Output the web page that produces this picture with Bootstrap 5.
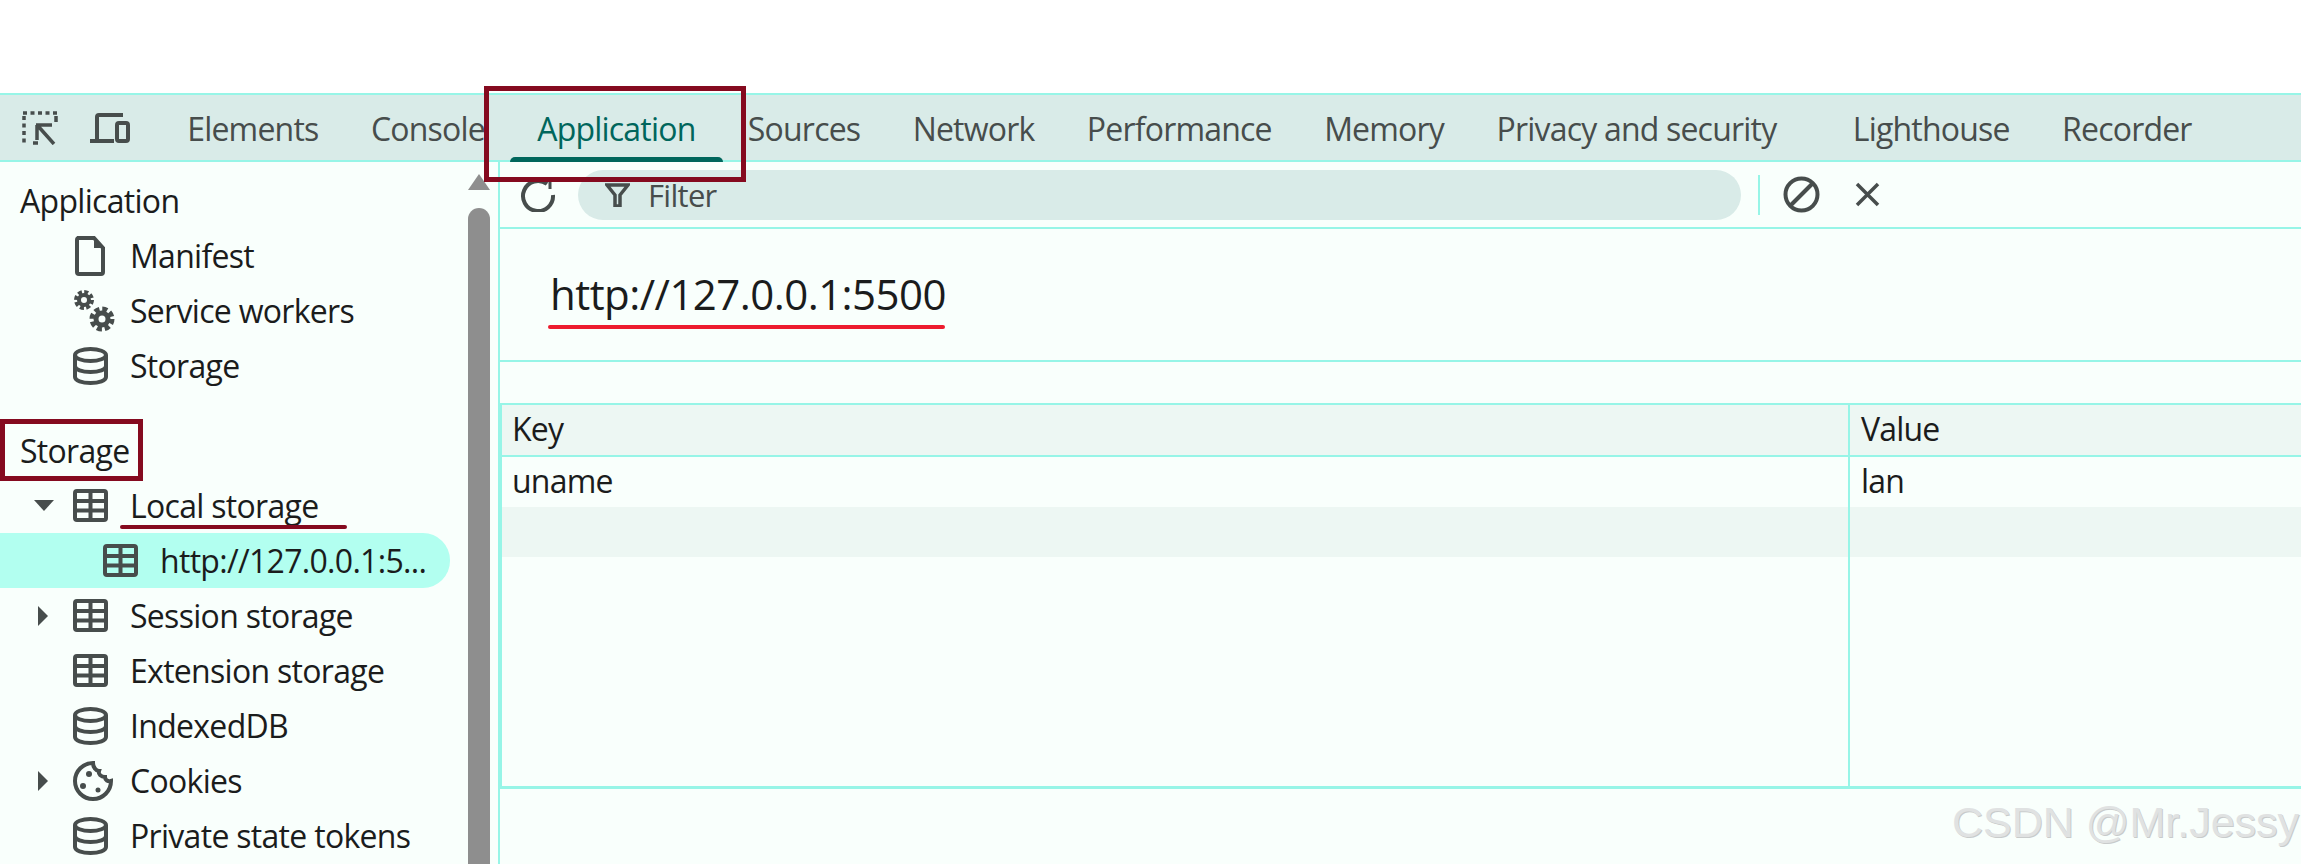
<!DOCTYPE html>
<html lang="en"><head><meta charset="utf-8"><title>Application</title>
<link href="https://cdn.jsdelivr.net/npm/bootstrap@5.3.0/dist/css/bootstrap.min.css" rel="stylesheet">
<style>
:root{--edge:#97f5e7;--pane:#f9fffc;--bar:#d9ebe8;--ink:#474d4c;--dark:#1b1c1c;--wine:#850a1f}
html,body{height:100%;overflow:hidden;background:#fff}
body{font-family:"Open Sans","Liberation Sans",sans-serif;color:var(--dark);letter-spacing:-.7px}
.ic{display:block;flex:none;color:var(--ink);fill:none;stroke:currentColor}
.dt-root{position:relative;margin-top:93px;height:771px;background:var(--pane);border-top:2px solid var(--edge)}
.dt-tabs{height:67px;background:var(--bar);border-bottom:2px solid var(--edge);padding-left:22px}
.dt-tools{width:139px;gap:32px;height:100%}
.dt-sep{width:2px;height:40px;background:var(--edge)}
.dt-tabs .nav-link{position:relative;color:var(--ink);font-size:32px;letter-spacing:-.8px;line-height:67px;padding:0 26.200px;height:65px}
.dt-tabs .nav-link.active{color:#00665c}
.dt-tabs .nav-link.active::after{content:"";position:absolute;left:-1px;right:-1px;bottom:-2px;height:5px;border-radius:5px 5px 0 0;background:#00665c}
.dt-tabs .nav-item-gap{margin-left:24px}
.dt-body{height:702px;overflow:hidden}
.dt-side{flex:none;position:relative;border-right:2px solid var(--edge);width:500px}
.dt-tree{padding-top:11px;font-size:32px}
.dt-row{position:relative;height:55px;display:flex;align-items:center;background:transparent;border:0;padding:0;color:var(--dark);line-height:55px;white-space:nowrap}
.dt-lab{position:absolute;left:130px}
.dt-row .ic-at{position:absolute;left:73px}
.dt-head{padding-left:20px}
.dt-gap{height:30px}
.dt-sel{background:#b2fff0;width:450px;border-radius:0 27px 27px 0}
.dt-sel .dt-lab{left:160px}
.dt-sel .ic-at{left:103px}
.dt-arrow{position:absolute;fill:var(--ink);stroke:none}
.dt-scroll-thumb{position:absolute;left:468px;top:46px;width:22px;height:680px;border-radius:11px 11px 0 0;background:#8e8e8e}
.dt-scroll-up{position:absolute;left:468px;top:12px}
.dt-main{min-width:0}
.dt-filter{height:67px;border-bottom:2px solid var(--edge);padding-left:20px}
.dt-pill{width:1163px;height:50px;margin-left:22px;background:var(--bar);border-radius:25px;padding-left:27px;gap:18px;color:var(--ink);font-size:31px;line-height:52px}
.dt-filter .dt-sep{margin-left:17px}
.dt-block{margin-left:23px}
.dt-close{margin-left:35px}
.dt-origin{height:133px;border-bottom:2px solid var(--edge);padding:0 0 2px 50px;font-size:42px;letter-spacing:-.55px}
.dt-grid{margin-top:41px;height:381px;border-top:2px solid var(--edge);border-left:2px solid var(--edge);border-bottom:3px solid var(--edge);box-sizing:content-box;width:100%;table-layout:fixed;border-collapse:separate;border-spacing:0;font-size:32px;letter-spacing:-.8px}
.dt-grid th,.dt-grid td{font-weight:400;padding:0 0 2px 10px;line-height:48px;height:50px;color:var(--dark);background:transparent;vertical-align:middle;border-bottom:0;box-shadow:none}
.dt-grid th:last-child,.dt-grid td:last-child{padding-left:11px}
.dt-grid th{background:#edf7f3;height:52px;border-bottom:2px solid var(--edge)}
.dt-grid .c1{width:1348px;border-right:2px solid var(--edge)}
.dt-grid tr.alt td{background:#edf7f3}
.dt-grid tr.fill td{height:auto}
.dt-mark{position:absolute;border:5px solid var(--wine);background:transparent;pointer-events:none}
.dt-mark-a{left:484px;top:-9px;width:262px;height:96px}
.dt-mark-b{left:0;top:324px;width:143px;height:62px}
.dt-line{position:absolute;height:4px;border-radius:2px}
.dt-line-a{left:120px;top:430px;width:227px;background:var(--wine)}
.dt-line-b{left:548px;top:230px;width:397px;background:#ed1c2e}
.dt-wm{position:absolute;left:1952px;top:702px;font-family:"Liberation Sans",sans-serif;font-size:43px;letter-spacing:0;line-height:1.2;color:#e0e2e2;text-shadow:1px 1px 0 #c8cbcb;white-space:nowrap}
</style></head>
<body>
<svg width="0" height="0" class="position-absolute">
<symbol id="i-grid" viewBox="0 0 35 33"><rect x="2" y="2" width="31" height="29" rx="2" stroke-width="4"/><path d="M2 12h31M2 21.500h31M17.500 2v29" stroke-width="4"/></symbol>
<symbol id="i-db" viewBox="0 0 35 38"><ellipse cx="17.500" cy="8" rx="15.500" ry="6" stroke-width="4"/><path d="M2 8v22c0 3.500 7 6 15.500 6S33 33.500 33 30V8M2 19c0 3.500 7 6 15.500 6S33 22.500 33 19" stroke-width="4"/></symbol>
</svg>
<div class="dt-root">
 <div class="dt-tabs d-flex align-items-center">
  <div class="dt-tools d-flex align-items-center">
   <svg class="ic" width="36" height="34" viewBox="0 0 36 34" stroke-width="3.500"><path d="M1 2h34" stroke-dasharray="4 3.500"/><path d="M2 5v28" stroke-dasharray="4 3.500"/><path d="M34 5v6M11 32h5"/><path d="M14 14h16M15 14v15M16 15l16 18"/></svg>
   <svg class="ic" width="40" height="30" viewBox="0 0 40 30" stroke-width="4"><path d="M7 27V4q0-2 2-2h24M0 28h24"/><rect x="27" y="10" width="11" height="18" rx="2"/></svg>
   <span class="dt-sep"></span>
  </div>
  <ul class="nav flex-nowrap">
   <li class="nav-item"><a class="nav-link" href="#">Elements</a></li>
   <li class="nav-item"><a class="nav-link" href="#">Console</a></li>
   <li class="nav-item"><a class="nav-link active" href="#">Application</a></li>
   <li class="nav-item"><a class="nav-link" href="#">Sources</a></li>
   <li class="nav-item"><a class="nav-link" href="#">Network</a></li>
   <li class="nav-item"><a class="nav-link" href="#">Performance</a></li>
   <li class="nav-item"><a class="nav-link" href="#">Memory</a></li>
   <li class="nav-item"><a class="nav-link" href="#">Privacy and security</a></li>
   <li class="nav-item nav-item-gap"><a class="nav-link" href="#">Lighthouse</a></li>
   <li class="nav-item"><a class="nav-link" href="#">Recorder</a></li>
  </ul>
 </div>
 <div class="dt-body d-flex">
  <aside class="dt-side">
   <div class="dt-tree list-group list-group-flush">
    <div class="dt-row dt-head">Application</div>
    <div class="dt-row"><svg class="ic ic-at" width="34" height="40" viewBox="0 0 34 40" stroke-width="4"><path d="M4 2h17l9 10v24q0 2-2 2H6q-2 0-2-2V4q0-2 2-2z"/><path d="M21 2v10h9" fill="currentColor" stroke="none"/></svg><span class="dt-lab">Manifest</span></div>
    <div class="dt-row"><svg class="ic ic-at" width="42" height="42" viewBox="0 0 42 42"><circle cx="11" cy="10" r="5" stroke-width="4"/><circle cx="11" cy="10" r="8" stroke-width="4" stroke-dasharray="4 2.280"/><circle cx="29" cy="29" r="6" stroke-width="5"/><circle cx="29" cy="29" r="10" stroke-width="5" stroke-dasharray="5 2.850"/></svg><span class="dt-lab">Service workers</span></div>
    <div class="dt-row"><svg class="ic ic-at" width="35" height="38"><use href="#i-db"/></svg><span class="dt-lab">Storage</span></div>
    <div class="dt-gap"></div>
    <div class="dt-row dt-head">Storage</div>
    <div class="dt-row"><svg class="dt-arrow" width="20" height="11" viewBox="0 0 20 11" style="left:34px"><path d="M0 0h20L10 11z"/></svg><svg class="ic ic-at" width="35" height="33"><use href="#i-grid"/></svg><span class="dt-lab">Local storage</span></div>
    <div class="dt-row dt-sel"><svg class="ic ic-at" width="35" height="33"><use href="#i-grid"/></svg><span class="dt-lab">http://127.0.0.1:5...</span></div>
    <div class="dt-row"><svg class="dt-arrow" width="10" height="20" viewBox="0 0 10 20" style="left:38px"><path d="M0 0l10 10L0 20z"/></svg><svg class="ic ic-at" width="35" height="33"><use href="#i-grid"/></svg><span class="dt-lab">Session storage</span></div>
    <div class="dt-row"><svg class="ic ic-at" width="35" height="33"><use href="#i-grid"/></svg><span class="dt-lab">Extension storage</span></div>
    <div class="dt-row"><svg class="ic ic-at" width="35" height="38"><use href="#i-db"/></svg><span class="dt-lab">IndexedDB</span></div>
    <div class="dt-row"><svg class="dt-arrow" width="10" height="20" viewBox="0 0 10 20" style="left:38px"><path d="M0 0l10 10L0 20z"/></svg><svg class="ic ic-at" width="40" height="40" viewBox="0 0 40 40" stroke-width="4"><path d="M20 2a18 18 0 1 0 18 18c-3 1-6-1-6-4-4 0-7-3-6-6-3 0-6-4-6-8z"/><g fill="currentColor" stroke="none"><circle cx="16" cy="13" r="3"/><circle cx="10" cy="25" r="3"/><circle cx="25" cy="29" r="2.500"/></g></svg><span class="dt-lab">Cookies</span></div>
    <div class="dt-row"><svg class="ic ic-at" width="35" height="38"><use href="#i-db"/></svg><span class="dt-lab">Private state tokens</span></div>
   </div>
   <svg class="dt-scroll-up" width="22" height="16" viewBox="0 0 22 16"><path d="M11 0L22 16H0z" fill="#8e8e8e"/></svg>
   <div class="dt-scroll-thumb"></div>
  </aside>
  <main class="dt-main flex-grow-1">
   <div class="dt-filter d-flex align-items-center">
    <svg class="ic" width="36" height="34" viewBox="0 0 36 34" stroke-width="4"><path d="M27 6A15 15 0 1 0 33 17"/><path d="M20 1h10v10" stroke-width="3"/></svg>
    <div class="dt-pill d-flex align-items-center"><svg class="ic" width="25" height="24" viewBox="0 0 25 24" stroke-width="3.500"><path d="M2 2h21l-8 10v11h-5V12z"/></svg><span>Filter</span></div>
    <span class="dt-sep"></span>
    <svg class="ic dt-block" width="37" height="37" viewBox="0 0 37 37" stroke-width="4"><circle cx="18.500" cy="18.500" r="16"/><path d="M7 30L30 7"/></svg>
    <svg class="ic dt-close" width="25" height="25" viewBox="0 0 25 25" stroke-width="3.500"><path d="M2 2l21 21M23 2L2 23"/></svg>
   </div>
   <div class="dt-origin d-flex align-items-center">http://127.0.0.1:5500</div>
   <table class="dt-grid table mb-0">
    <thead><tr><th class="c1">Key</th><th>Value</th></tr></thead>
    <tbody>
     <tr><td class="c1">uname</td><td>lan</td></tr>
     <tr class="alt"><td class="c1"></td><td></td></tr>
     <tr class="fill"><td class="c1"></td><td></td></tr>
    </tbody>
   </table>
  </main>
 </div>
 <div class="dt-mark dt-mark-a"></div>
 <div class="dt-mark dt-mark-b"></div>
 <div class="dt-line dt-line-a"></div>
 <div class="dt-line dt-line-b"></div>
 <div class="dt-wm">CSDN @Mr.Jessy</div>
</div>
<script src="https://cdn.jsdelivr.net/npm/bootstrap@5.3.0/dist/js/bootstrap.bundle.min.js"></script>
</body></html>
